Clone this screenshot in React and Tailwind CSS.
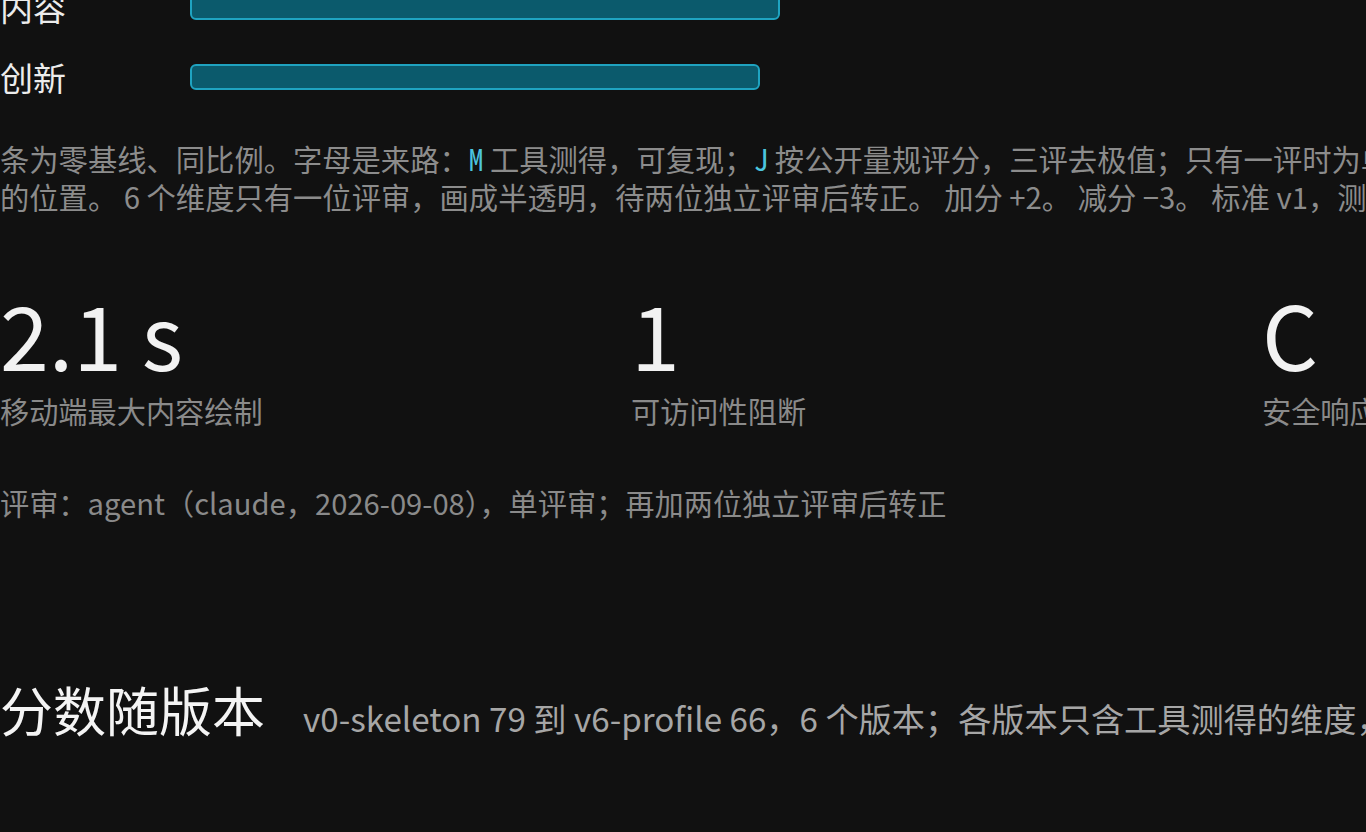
import React from "react";

const sans = { fontFamily: '"Noto Sans CJK SC", "Noto Sans", sans-serif' };

function Bar({ label, width }) {
  return (
    <div className="flex h-[70px] items-center">
      <div className="w-[190px] shrink-0 text-[33px] leading-none text-[#ececec]">{label}</div>
      <div
        className="h-[26px] rounded-[6px] border-2 border-[#1fa3c0] bg-[#0b5a6c]"
        style={{ width }}
      />
    </div>
  );
}

function Stat({ value, label }) {
  return (
    <div className="w-[631px] shrink-0">
      <div className="text-[88px] leading-[88px] text-[#f2f2f2]">{value}</div>
      <div className="mt-[14px] text-[29.2px] leading-[38px] text-[#8a8a8a] whitespace-nowrap">{label}</div>
    </div>
  );
}

export default function App() {
  const mono = "font-['Noto_Sans_Mono_CJK_SC','DejaVu_Sans_Mono',monospace] text-[#4cc4df]";
  return (
    <div className="h-[832px] w-full overflow-hidden bg-[#111111]" style={sans}>
      <div className="-mt-[28px] flex flex-col">
        <Bar label="内容" width={590} />
        <Bar label="创新" width={570} />

        <div className="mt-[27px] text-[29.3px] leading-[38px] text-[#8c8c8c] whitespace-nowrap">
          <div>
            条为零基线、同比例。字母是来路：<span className={mono}>M</span> 工具测得，可复现；<span className={mono}>J</span> 按公开量规评分，三评去极值；只有一评时为单评，标在量规
          </div>
          <div>
            的位置。 6 个维度只有一位评审，画成半透明，待两位独立评审后转正。 加分 +2。 减分 −3。 标准 v1，测试于同一环境
          </div>
        </div>

        <div className="mt-[74px] flex">
          <Stat value="2.1 s" label="移动端最大内容绘制" />
          <Stat value="1" label="可访问性阻断" />
          <Stat value="C" label="安全响应头" />
        </div>

        <div className="mt-[54px] text-[29.2px] leading-[38px] text-[#8a8a8a] whitespace-nowrap">
          评审：agent（claude，2026-09-08），单评审；再加两位独立评审后转正
        </div>

        <div className="mt-[152px] flex items-baseline gap-[38px] whitespace-nowrap">
          <h2 className="text-[53px] leading-[72px] font-normal text-[#f4f4f4]">分数随版本</h2>
          <span className="text-[33.2px] text-[#a6a6a6]">
            v0-skeleton 79 到 v6-profile 66，6 个版本；各版本只含工具测得的维度，评审维度不计入
          </span>
        </div>
      </div>
    </div>
  );
}
